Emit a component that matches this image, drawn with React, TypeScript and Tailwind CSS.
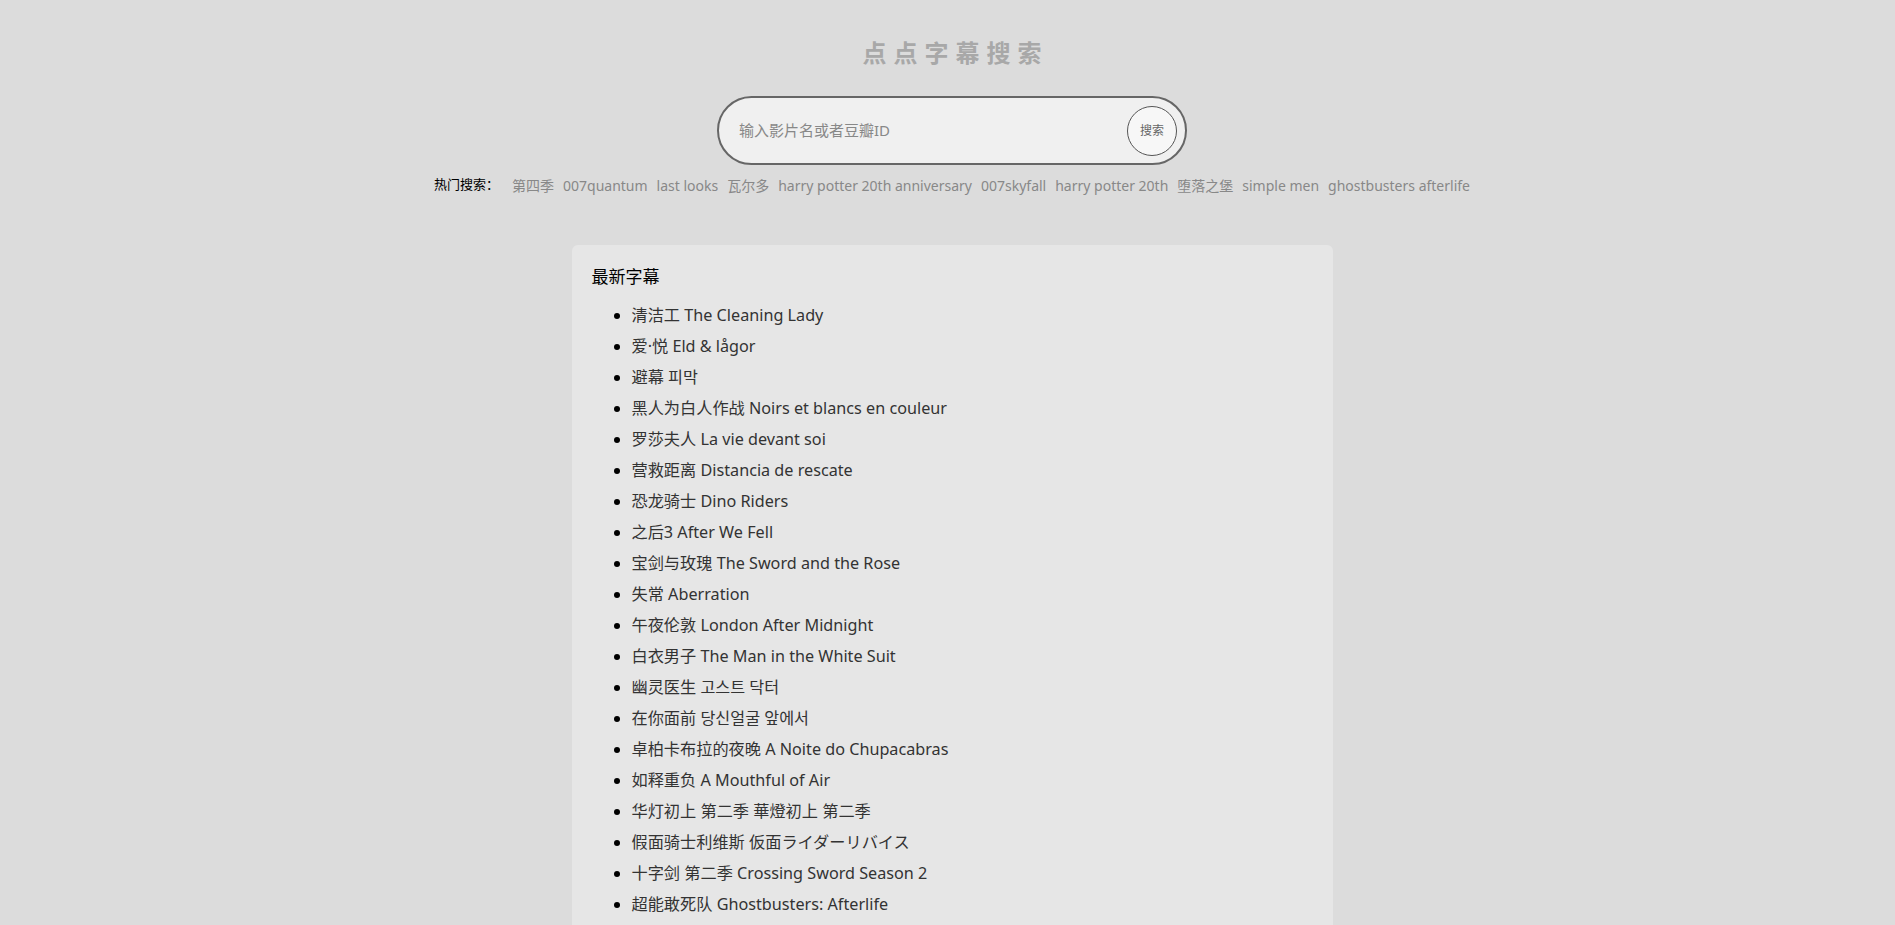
import React, { useState } from "react";

const hotWords = [
  "第四季",
  "007quantum",
  "last looks",
  "瓦尔多",
  "harry potter 20th anniversary",
  "007skyfall",
  "harry potter 20th",
  "堕落之堡",
  "simple men",
  "ghostbusters afterlife",
];

const latest = [
  "清洁工 The Cleaning Lady",
  "爱·悦 Eld & lågor",
  "避幕 피막",
  "黑人为白人作战 Noirs et blancs en couleur",
  "罗莎夫人 La vie devant soi",
  "营救距离 Distancia de rescate",
  "恐龙骑士 Dino Riders",
  "之后3 After We Fell",
  "宝剑与玫瑰 The Sword and the Rose",
  "失常 Aberration",
  "午夜伦敦 London After Midnight",
  "白衣男子 The Man in the White Suit",
  "幽灵医生 고스트 닥터",
  "在你面前 당신얼굴 앞에서",
  "卓柏卡布拉的夜晚 A Noite do Chupacabras",
  "如释重负 A Mouthful of Air",
  "华灯初上 第二季 華燈初上 第二季",
  "假面骑士利维斯 仮面ライダーリバイス",
  "十字剑 第二季 Crossing Sword Season 2",
  "超能敢死队 Ghostbusters: Afterlife",
];

const App: React.FC = () => {
  const [query, setQuery] = useState("");

  return (
    <div
      className="min-h-screen bg-[#dcdcdc] pt-[37px] pl-[9px] flex flex-col items-center"
      style={{ fontFamily: '"Noto Sans", "Noto Sans CJK SC", sans-serif' }}
    >
      <h1 className="text-[24px] leading-8 font-bold tracking-[7px] text-[#a8a8a8] pl-[7px]">
        点点字幕搜索
      </h1>

      <div className="mt-[27px] w-[470px] h-[69px] rounded-full border-2 border-[#666] bg-[#f0f0f0] flex items-center pl-5 pr-2">
        <input
          value={query}
          onChange={(e) => setQuery(e.target.value)}
          placeholder="输入影片名或者豆瓣ID"
          className="flex-1 bg-transparent outline-none text-[15px] text-[#333] placeholder:text-[#888]"
        />
        <button className="w-[50px] h-[50px] rounded-full border border-[#555] bg-[#f7f7f7] text-[12px] text-[#666]">
          搜索
        </button>
      </div>

      <div className="mt-[10px] h-5 flex items-center text-[14px]">
        <span className="text-[13px] text-black mr-[13px]">热门搜索：</span>
        {hotWords.map((w) => (
          <a key={w} className="text-[#888] mr-[9px] last:mr-0 cursor-pointer">
            {w}
          </a>
        ))}
      </div>

      <div className="mt-[50px] w-[761px] bg-[#e6e6e6] rounded-md px-5 pt-5 pb-5">
        <h2 className="text-[17px] leading-6 text-black">最新字幕</h2>
        <ul className="list-disc pl-10 mt-[11px] marker:text-black">
          {latest.map((t) => (
            <li key={t} className="text-[16.2px] leading-[31px] text-[#333]">
              {t}
            </li>
          ))}
        </ul>
      </div>
    </div>
  );
};

export default App;
